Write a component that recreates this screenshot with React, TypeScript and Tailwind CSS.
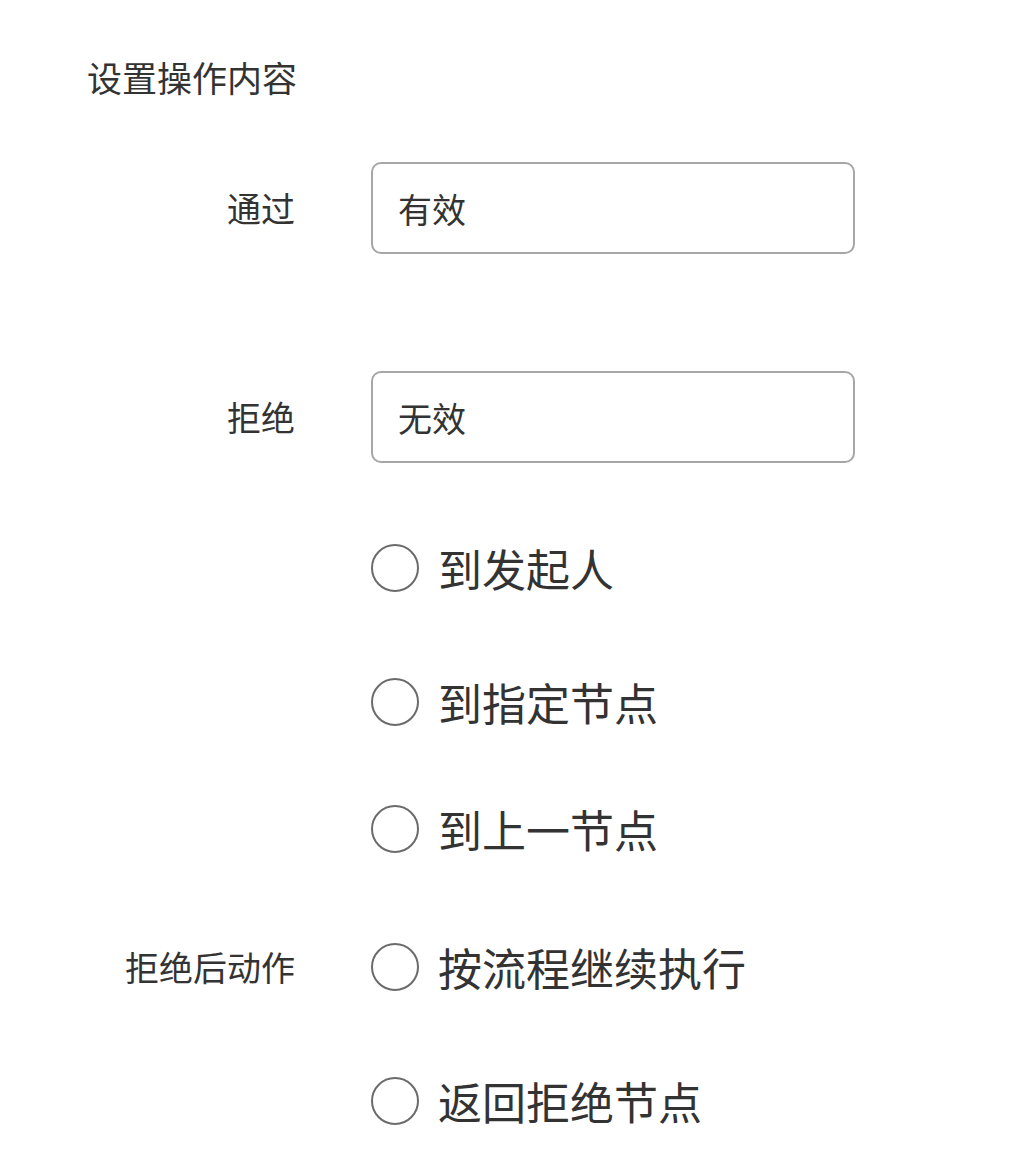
export default function App() {
  const radios = [
    { text: '到发起人', mt: 'mt-[81px]', label: '' },
    { text: '到指定节点', mt: 'mt-[86px]', label: '' },
    { text: '到上一节点', mt: 'mt-[79px]', label: '' },
    { text: '按流程继续执行', mt: 'mt-[90px]', label: '拒绝后动作' },
    { text: '返回拒绝节点', mt: 'mt-[86px]', label: '' },
  ];

  return (
    <div
      className="w-[1020px] h-[1174px] bg-white text-[#333333] overflow-hidden"
      style={{ fontFamily: '"Noto Sans CJK SC", "Noto Sans", sans-serif' }}
    >
      {/* Title */}
      <div className="pt-[59px] pl-[87px] text-[35px] leading-[35px]">
        设置操作内容
      </div>

      {/* 通过 */}
      <div className="mt-[68px] flex items-center">
        <div className="w-[295px] text-right text-[34px] leading-[34px]">通过</div>
        <div className="ml-[76px] w-[484px] h-[92px] rounded-[10px] border-2 border-[#a6a6a6] flex items-center pl-[25px] text-[34px]">
          有效
        </div>
      </div>

      {/* 拒绝 */}
      <div className="mt-[117px] flex items-center">
        <div className="w-[295px] text-right text-[34px] leading-[34px]">拒绝</div>
        <div className="ml-[76px] w-[484px] h-[92px] rounded-[10px] border-2 border-[#a6a6a6] flex items-center pl-[25px] text-[34px]">
          无效
        </div>
      </div>

      {/* Radio options */}
      {radios.map((r) => (
        <div key={r.text} className={`${r.mt} flex items-center h-[48px]`}>
          <div className="w-[295px] text-right text-[34px] leading-[34px]">{r.label}</div>
          <div className="ml-[76px] w-[48px] h-[48px] rounded-full border-2 border-[#6b6b6b]" />
          <div className="ml-[19px] text-[44px] leading-[48px]">{r.text}</div>
        </div>
      ))}
    </div>
  );
}
